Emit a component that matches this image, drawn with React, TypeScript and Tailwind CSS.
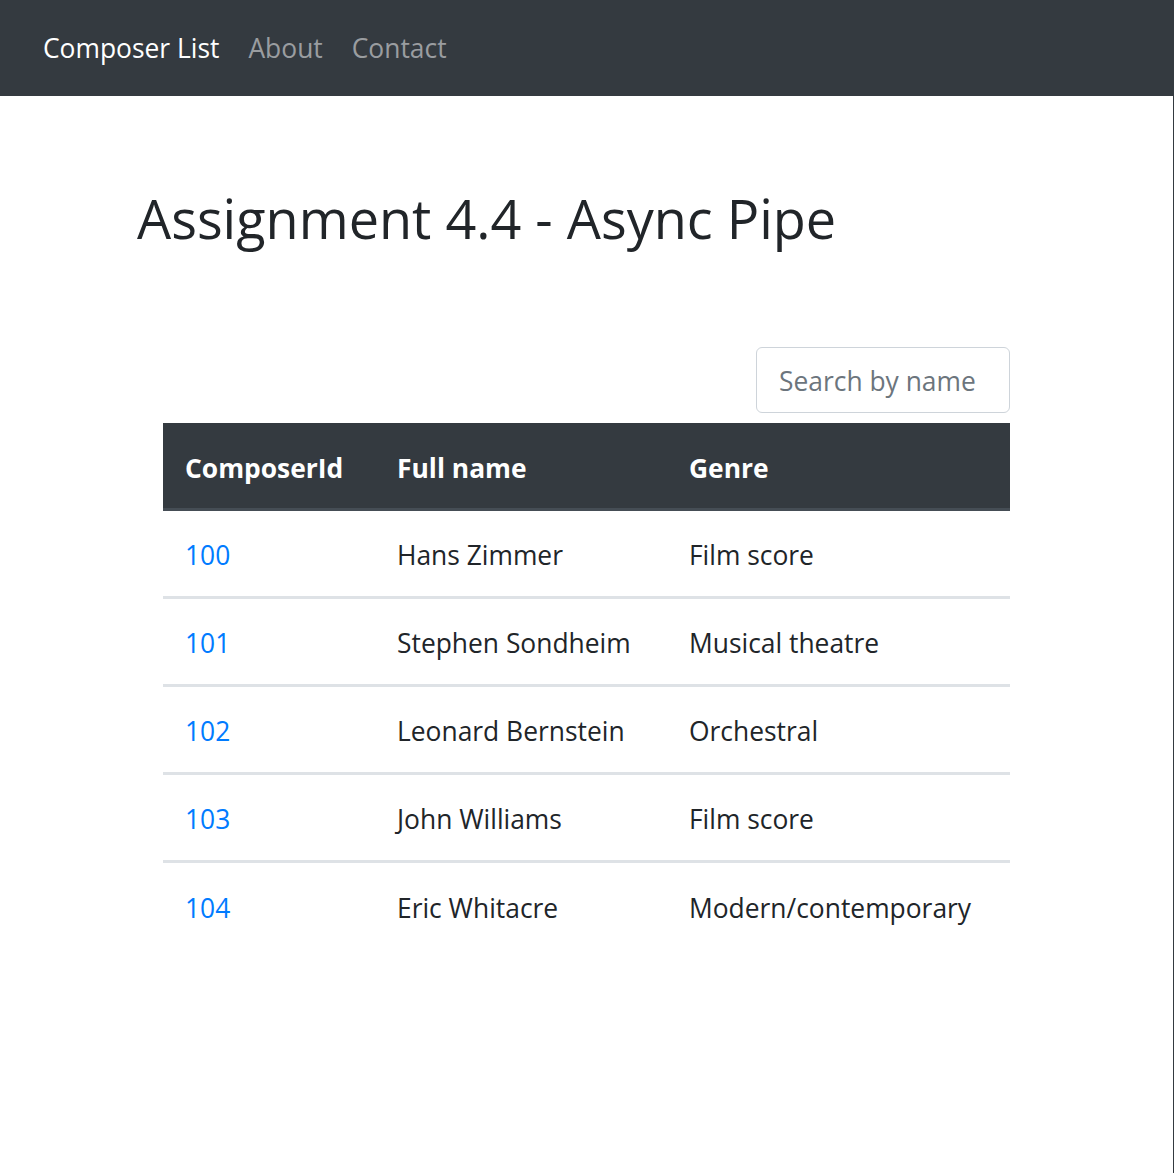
import React from "react";

type Composer = {
  id: number;
  name: string;
  genre: string;
};

const composers: Composer[] = [
  { id: 100, name: "Hans Zimmer", genre: "Film score" },
  { id: 101, name: "Stephen Sondheim", genre: "Musical theatre" },
  { id: 102, name: "Leonard Bernstein", genre: "Orchestral" },
  { id: 103, name: "John Williams", genre: "Film score" },
  { id: 104, name: "Eric Whitacre", genre: "Modern/contemporary" },
];

const font = "font-['Open_Sans','Noto_Sans',sans-serif]";

export default function App() {
  return (
    <div className={`min-h-screen border-r border-[#343a40] bg-white text-[#212529] ${font}`}>
      <nav className="flex h-[96px] items-center gap-[29px] bg-[#343a40] pl-[43px] pt-[2px] text-[26.4px]">
        <a className="text-white">Composer List</a>
        <a className="text-[#9a9da0]">About</a>
        <a className="text-[#9a9da0]">Contact</a>
      </nav>

      <main className="pl-[137px]">
        <h1 className="pt-[90px] text-[54px] leading-[1.2] font-normal">Assignment 4.4 - Async Pipe</h1>

        <div className="mt-[96px] ml-[26px] w-[847px]">
          <div className="flex justify-end">
            <input
              type="text"
              placeholder="Search by name"
              className="h-[66px] w-[254px] rounded-[6px] border border-[#ced4da] px-[22px] pt-[2px] text-[26.4px] placeholder:text-[#6c757d] outline-none"
            />
          </div>

          <table className="mt-[10px] w-full table-fixed border-collapse text-[26.4px]">
            <colgroup>
              <col className="w-[212px]" />
              <col className="w-[292px]" />
              <col />
            </colgroup>
            <thead>
              <tr className="h-[87px] bg-[#343a40] text-left text-white">
                <th className="border-b-[3px] border-[#454d55] px-[22px] pt-[6px] font-bold">ComposerId</th>
                <th className="border-b-[3px] border-[#454d55] px-[22px] pt-[6px] font-bold">Full name</th>
                <th className="border-b-[3px] border-[#454d55] px-[22px] pt-[6px] font-bold">Genre</th>
              </tr>
            </thead>
            <tbody>
              {composers.map((c, i) => (
                <tr key={c.id} className={i === 0 ? "h-[88px]" : "h-[88px] border-t-[3px] border-[#dee2e6]"}>
                  <td className="px-[22px] pt-[4px] text-[#007bff]">{c.id}</td>
                  <td className="px-[22px] pt-[4px]">{c.name}</td>
                  <td className="px-[22px] pt-[4px]">{c.genre}</td>
                </tr>
              ))}
            </tbody>
          </table>
        </div>
      </main>
    </div>
  );
}
